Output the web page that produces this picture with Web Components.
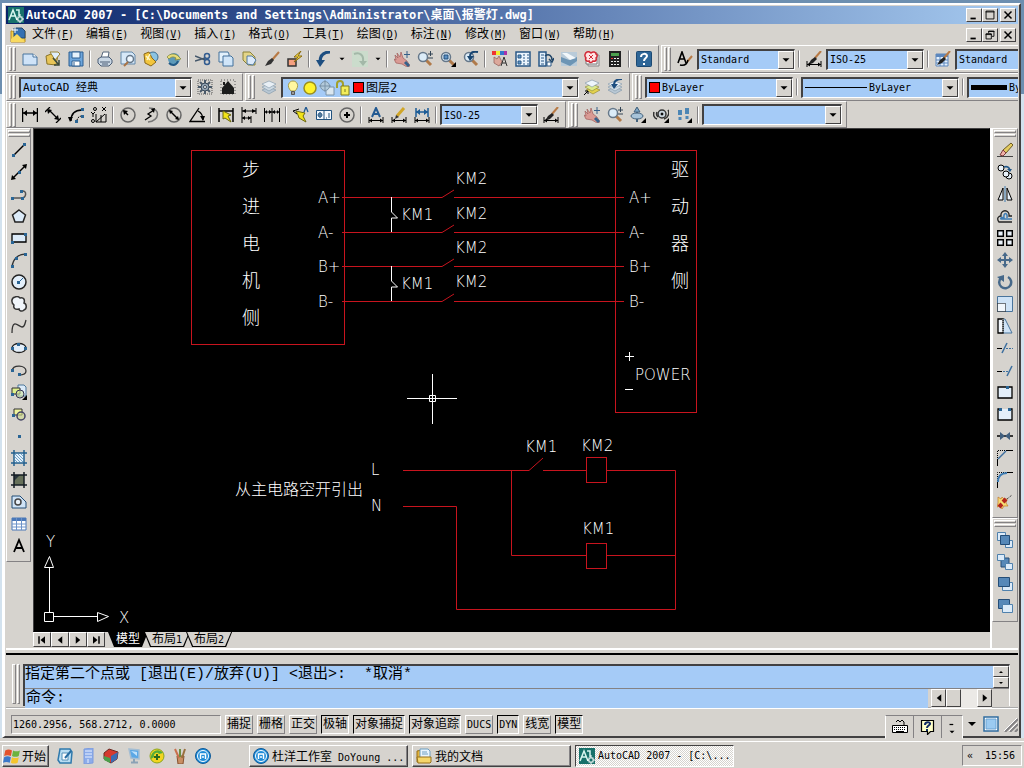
<!DOCTYPE html>
<html lang="zh-CN">
<head>
<meta charset="utf-8">
<title>AutoCAD 2007</title>
<style>
    html, body { height: 100%; }
    body {
        margin: 0;
        overflow: hidden;
        font-family: "DejaVu Sans Mono", "Noto Sans CJK SC", monospace;
        font-size: 12px;
        color: #000;
        --face: #d6d3ce;
        --light: #fff;
        --shade: #848284;
        --dark: #424142;
        --field: #a5cbf7;
    }
</style>
</head>
<body>
<cad-desktop></cad-desktop>

<script>
// ---------- icons, all on a 16 x 16 grid ----------
const dot = (x, y) => `<rect x="${x - 1}" y="${y - 1}" width="3" height="3" fill="#2a6595" stroke="none"/>`;
const corner = '<path d="M16 11v5h-5z" fill="#000" stroke="none"/>';
const magnifier = '<path d="M9 9l5 5" stroke="#b07a4a" stroke-width="3"/><circle cx="6" cy="6" r="4.5" fill="#dcecf8" stroke="#66788a" stroke-width="1.5"/>';
const hand = '<path d="M1 4l3 3-1-5 3 4 1-5 2 6 4 3 3 5-3 1-5-3-6-1-2-4 2 1z" fill="#d99a94" stroke="#a05f5c" stroke-width=".7"/><path d="M11 11l4 4" stroke="#36618a" stroke-width="3"/><path d="M13 0v7M10 3.500h6" stroke="#355f88"/>';
const layers = '<path d="M1 11l7-3 7 3-7 4z" fill="#b9c8d4" stroke="#7d93a6" stroke-width=".6"/><path d="M1 8l7-3 7 3-7 4z" fill="#cfdbe4" stroke="#7d93a6" stroke-width=".6"/><path d="M1 5l7-3 7 3-7 4z" fill="#e8eff5" stroke="#7d93a6" stroke-width=".6"/>';
const brush = '<path d="M15 0L9 7" stroke="#b87a45" stroke-width="2"/><path d="M9 6l2 2-4 4-5 2 3-5z" fill="#222" stroke="none"/>';
const sheet = '<path d="M1 3h10l4 3v8H1z" fill="#cfe3f8" stroke="#48759e"/>';
const dimLine = '<path d="M1 10v6M15 10v6M1 13.500h14"/><path d="M1 13.500l3-2v4zM15 13.500l-3-2v4z" fill="#000" stroke="none"/>';
const bolt = '<path d="M2 2l9 3-2 2 4 1-4 7 0-5-4 1 1-4z" fill="#f2e318" stroke="#6d6a10"/>';
const cadLogo = '<rect width="16" height="16" fill="#17716a" stroke="none"/><path d="M1 13L5 3l4 10M3 9h5M8 3h3v6" stroke="#d8f6ef" stroke-width="1.500"/><path d="M12 7v9M8 12h8" stroke="#fff"/><rect x="10" y="10" width="4" height="4" fill="#17716a" stroke="#fff"/>';
const maxthon = '<circle cx="8" cy="8" r="7.500" fill="#1f8cd8" stroke="#0f5a98"/><circle cx="8" cy="8" r="5.500" stroke="#fff"/><path d="M5.500 11V6h5v5M8 8v2" stroke="#fff" stroke-width="1.500"/>';

const ICONS = {
    file: '<path d="M1 4h14v11H1z" fill="#f4cf4d" stroke="#b88a1c"/><path d="M4 1h8l3 3v7H4z" fill="#3470b2" stroke="#24486d"/><path d="M1 12l6-5 8 8H1z" fill="#f8da60" stroke="none"/><path d="M5 0v6M2 3h6" stroke="#fff"/>',
    new: sheet + '<path d="M11 3v3h4" fill="#fff" stroke="#48759e"/>',
    open: '<path d="M1 5l5-2 2 2 5-1-2 10-9-1z" fill="#e8c558" stroke="#8a7428"/><path d="M5 1h8l2 2-5 6z" fill="#dfeefc" stroke="#9a8534"/><path d="M8 7l6 7M14 9v5h-5" stroke="#3b4a39" stroke-width="1.500"/>',
    save: '<path d="M1 1h14v14H1z" fill="#6ea6dc" stroke="#2d5f92"/><path d="M4 1h8v6H4z" fill="#e6f2fc" stroke="#2d5f92"/><path d="M4 10h8v5H4z" fill="#fff" stroke="#2d5f92"/><path d="M6 11v4" stroke="#2d5f92"/>',
    print: '<path d="M4 7l2-6h6l-1 6z" fill="#fff" stroke="#56667a"/><path d="M1 8l3-2h8l3 3v3l-3 3H4l-3-3z" fill="#cad7e4" stroke="#4b5d74"/><path d="M3 11h10M5 13h6" stroke="#4b5d74"/>',
    preview: '<path d="M1 1h11l3 3v9H1z" fill="#d6e8f8" stroke="#6287a8"/><circle cx="10" cy="8" r="3.500" fill="#eef7ff" stroke="#66788a" stroke-width="1.500"/><path d="M8 11l-4 4" stroke="#a97346" stroke-width="2"/>',
    publish: '<circle cx="10" cy="6" r="5" fill="#8bc3e2" stroke="#3b6d90"/><path d="M1 3l5-2 3 6 4 4-5 4-6-3z" fill="#f2c53d" stroke="#8b681a"/><path d="M3 5l4 4M7 3L4 9" stroke="#fff7c8" stroke-width="1.500"/>',
    dwf: '<circle cx="8" cy="8" r="6" fill="#5d9ab9" stroke="none"/><path d="M1 6c3-4 9-4 12 0l2 2-6 1 1-2c-3-2-5-1-7 1z" fill="#e6dc78" stroke="#7d813b" stroke-width=".7"/><path d="M12 10c-2 5-6 5-9 2" stroke="#235a86" stroke-width="2"/>',
    cut: '<path d="M0 5l10 4M0 10l10-3" stroke="#44576a" stroke-width="1.500"/><circle cx="12" cy="5" r="2.500" stroke="#325c90" stroke-width="1.500"/><circle cx="12" cy="11" r="2.500" stroke="#325c90" stroke-width="1.500"/>',
    copy: '<path d="M1 1h9l1 2v8H1z" fill="#e2f0fb" stroke="#42719b"/><path d="M5 5h8l2 2v8H5z" fill="#d0e5f8" stroke="#42719b"/>',
    paste: '<path d="M2 1h7l5 5v8H7L2 9z" fill="#e4d589" stroke="#8a8138"/><path d="M6 5h5l4 4-3 5-6-1z" fill="#dceafa" stroke="#50799f"/>',
    brush: '<path d="M15 1L8 9" stroke="#b87a45" stroke-width="2"/><path d="M8 7l2 2-3 4-6 2 3-5z" fill="#333" stroke="none"/>',
    match: '<path d="M1 8h8v7H1z" fill="#f5a080" stroke="#333" stroke-width="1.500"/><path d="M14 0L7 6l4 0-4 5 8-6h-4z" fill="#ffe94a" stroke="#8b6b10"/>',
    undo: '<path d="M14 1C7 1 4 5 4 11" stroke="#1d4e80" stroke-width="3"/><path d="M0 9h9l-5 7z" fill="#1d4e80" stroke="none"/>',
    redo: '<rect width="16" height="16" fill="#cbdccc" stroke="none"/><path d="M2 3c6-2 10 1 9 8" stroke="#a3b8a8" stroke-width="2"/><path d="M7 10h8l-4 5z" fill="#a3b8a8" stroke="none"/>',
    pan: hand,
    zoom: magnifier + '<path d="M11 3h5M13.500 0v5M11 7h5" stroke="#345"/>',
    zoomWindow: magnifier + '<path d="M4 4h4v4H4z" fill="#5c91c4" stroke="#234e7a"/>' + corner,
    zoomPrev: magnifier + '<path d="M15 1C9 0 7 2 7 6" stroke="#194671" stroke-width="2"/><path d="M4 5h7l-4 5z" fill="#194671" stroke="none"/>',
    props: '<path d="M0 0h4v4H0z" fill="#e33" stroke="none"/><path d="M4 0h4v4H4z" fill="#ee3" stroke="none"/><path d="M8 0h4v4H8z" fill="#37c" stroke="none"/><path d="M12 0h3v4h-3z" fill="#a3a" stroke="none"/><path d="M2 6l3 2 2-3 3 6-3 4-5-3z" fill="#dca89b" stroke="#8c5953" stroke-width=".7"/><path d="M9 15l3-9 3 9M10 12h4" stroke="#333"/>',
    center: '<path d="M1 1h14v14H1z" fill="#eaf4fd" stroke="#2a5886" stroke-width="1.500"/><path d="M3 4h3v3H3zM3 10h3v3H3z" fill="#6399c8" stroke="#2a5886"/><path d="M8 4h2m2 0h2M8 7h2m2 0h2M8 10h2m2 0h2M8 13h2m2 0h2" stroke="#2a5886"/>',
    palette: '<path d="M1 1h7v14H1z" fill="#e2effb" stroke="#2a5886" stroke-width="1.500"/><path d="M3 4h3M3 7h3M3 10h3M3 13h3" stroke="#2a5886"/><path d="M7 5c4-3 7 0 7 4M11 8l3 3 2-4" stroke="#1f4467" stroke-width="1.500"/><path d="M9 11h4v4H9z" fill="#fff" stroke="#2a5886"/>',
    sheets: '<path d="M0 1h16v14H0z" fill="#b9cbd9" stroke="none"/><path d="M0 6l8 3 8-3v4l-7 5-9-4z" fill="#6d95b5" stroke="none"/><path d="M1 2h5l9 5-6 2z" fill="#f2f7fa" stroke="none"/>',
    markup: '<path d="M4 4h11v11H4z" fill="#e8e8e8" stroke="#888"/><path d="M2 2h11v11H2z" fill="#fff" stroke="#777"/><path d="M3 1c2-1 3 0 4 1 2-2 5-1 5 1 2 1 1 3 0 4 1 2-1 4-3 3-1 2-4 2-4 0-3 1-4-2-3-3-2-2-1-5 1-6z" fill="#ffe3e3" stroke="#d22a36" stroke-width="1.500"/><path d="M5 4l4 4M9 4L5 8" stroke="#d22a36"/>',
    calc: '<path d="M2 0h12v16H2z" fill="#222" stroke="none"/><path d="M4 2h8v3H4z" fill="#4da04e" stroke="none"/><path d="M4 7.500h8M4 10.500h8M4 13.500h8" stroke="#eee" stroke-dasharray="2 1"/><path d="M4 7.500h2" stroke="#e33"/>',
    help: '<rect x=".5" y=".5" width="15" height="15" rx="1" fill="#2e6697" stroke="#1d4a73"/><path d="M5 6c0-4 6-4 6-1 0 2-3 2-3 5M8 12v2" stroke="#fff" stroke-width="2"/>',
    textStyle: '<path d="M1 12L5 1l4 11M2 8h6" stroke-width="1.600"/><path d="M15 5l-5 6" stroke="#b87a45" stroke-width="2"/><path d="M11 9c-1 4-4 6-8 5" stroke-width="1.500"/>',
    dimStyle: brush + dimLine,
    tableStyle: '<path d="M1 3h12v12H1z" fill="#e4f0fc" stroke="#5d87bd"/><path d="M1 3h12v3H1z" fill="#5d87bd" stroke="none"/><path d="M1 9h12M1 12h12M5 3v12M9 3v12" stroke="#5d87bd"/>' + brush,
    gear: '<path d="M1 1h14v14H1z" stroke="#555" stroke-dasharray="1 1"/><path d="M8 1v14M1 8h14M3 3l10 10M13 3L3 13" stroke="#4a5a6a" stroke-width="2"/><circle cx="8" cy="8" r="4" fill="#93a4b4" stroke="#3c4b5a"/><circle cx="8" cy="8" r="1.500" fill="#fff" stroke="#3c4b5a"/>',
    home: '<path d="M1 1h14v14H1z" stroke="#555" stroke-dasharray="1 2"/><path d="M2 9l6-7 6 7v6H2z" fill="#1c1c1c" stroke="none"/><path d="M4 3v3" stroke="#1c1c1c" stroke-width="2"/>',
    layers: layers,
    layerPrev: layers + '<path d="M15 0c-5 0-8 2-8 6" stroke="#1d4e80" stroke-width="2"/><path d="M4 5h7l-4 5z" fill="#1d4e80" stroke="none"/>',
    layerCurrent: '<path d="M2 11l7-3 7 3-7 4z" fill="#e3d24f" stroke="#8b812d" stroke-width=".6"/><path d="M1 8l7-3 7 3-7 4z" fill="#dcea8b" stroke="#8b812d" stroke-width=".6"/><path d="M1 4l7-3 7 3-7 4z" fill="#eef5fb" stroke="#7d93a6" stroke-width=".6"/><path d="M0 16l4-4M1 12h3v3" />',
    bulb: '<path d="M6 11C1 6 4 1 8 1s7 5 2 10z" fill="#fff7a0" stroke="#a79d49"/><path d="M6.500 11.500h3v3h-3z" fill="#9a9a9a" stroke="#555"/>',
    sun: '<circle cx="8" cy="8" r="6" fill="#fff32e" stroke="#9b8f1e" stroke-width="1.500"/>',
    freeze: '<path d="M7 7h8v8H7z" fill="#dbe7ef" stroke="#7a93a8"/><circle cx="6" cy="6" r="4.500" fill="#b3cadb" stroke="#7a93a8"/><path d="M6 0v12M0 6h12" stroke="#7a93a8"/>',
    lock: '<path d="M1 8V4c0-4 6-4 6 0v3" stroke="#a3a02a" stroke-width="2"/><path d="M5 6h8v9H5z" fill="#f3ee5a" stroke="#7c7b20"/><path d="M9 9v3" stroke="#7c7b20"/>',
    // dimension bar
    dLinear: '<path d="M.5 1v14M15.500 1v14M1 6h14" stroke-width="1.500"/><path d="M1 6l4-3v6zM15 6l-4-3v6z" fill="#000" stroke="none"/>',
    dAligned: '<path d="M0 5l5-5M11 16l5-5M4 3l9 9" stroke-width="1.300"/><path d="M2 2l5 1-4 4zM14 13l-5-1 4-4z" fill="#000" stroke="none"/>',
    dArc: '<path d="M3 14C3 7 7 3 14 3" stroke-width="1.500"/><path d="M9 14c0-3 2-5 5-5" stroke-dasharray="2 1"/>' + dot(14, 2) + dot(14, 9) + dot(8, 14) + '<path d="M0 10h5l-3 5z" fill="#000" stroke="none"/>',
    dOrdinate: '<path d="M5 7v8h10V7M5 15l9-8M10 8v7"/><circle cx="4" cy="2" r="1.500"/><circle cx="2" cy="14" r="1.500"/><path d="M11 0l4 4M15 0l-4 4M0 5l2 2 2-2M2 7v3"/>',
    dRadius: '<circle cx="8" cy="8" r="7" stroke="#666" stroke-width="1.500"/><path d="M8 8L4 4" stroke-width="1.500"/><path d="M3 3l5 1-4 4z" fill="#000" stroke="none"/>',
    dJogged: '<path d="M6 1c12 0 11 13-1 14" stroke="#777" stroke-width="1.500"/><path d="M2 13l6-4-3-2 6-4" stroke-width="1.300"/><path d="M12 1L8 2l3 4z" fill="#000" stroke="none"/>',
    dDiameter: '<circle cx="8" cy="8" r="7" stroke="#666" stroke-width="1.500"/><path d="M4 4l8 8" stroke-width="1.500"/><path d="M3 3l4 1-3 3zM13 13l-4-1 3-3z" fill="#000" stroke="none"/>',
    dAngular: '<path d="M16 14.500H1L10 1M9 4c4 2 5 5 5 9" stroke-width="1.300"/><path d="M11 9h5l-2 5z" fill="#000" stroke="none"/>',
    dQuick: '<path d="M1 1v14M15 1v14M1 4h14" stroke-width="1.500"/><path d="M5 4l8 4-3 1 3 6-6-4-2 1z" fill="#f2e318" stroke="#6d6a10"/>',
    dBaseline: '<path d="M1 0v16M15 1v6M10 9v7M1 4h14M1 11h9"/><path d="M1 4l4-2v4zM15 4l-4-2v4zM1 11l3-2v4zM10 11l-3-2v4z" fill="#000" stroke="none"/>',
    dContinue: '<path d="M.5 1v14M8 1v14M15.500 1v14M1 5h14"/><path d="M8 5L5 3v4zM8 5l3-2v4zM1 5l2-2v4zM15 5l-2-2v4z" fill="#000" stroke="none"/>',
    leader: '<path d="M3 4l9 2-2 3 3 6-7-4-1-3z" fill="#f2e318" stroke="#6d6a10"/><path d="M0 4l6-2M0 4l4 3"/><path d="M11 5l2-5 2 5" stroke="#235a92" stroke-width="1.300"/>',
    tolerance: '<path d="M.5 3.500h15v9H.5zM8 4v8" fill="#f4f9fe" stroke="#21527e"/><circle cx="4" cy="8" r="2" stroke="#21527e"/><path d="M4 5v6M2 8h4M10 11h1M13 6v5" stroke="#21527e"/>',
    centerMark: '<circle cx="8" cy="8" r="7" stroke="#666" stroke-width="1.500"/><path d="M8 5v6M5 8h6" stroke-width="2"/>',
    dEdit: dimLine + '<path d="M4 10l4-9 4 9M5 7h6" stroke="#235a92" stroke-width="2"/>',
    dTextEdit: dimLine + '<path d="M13 1L6 9" stroke="#d1a628" stroke-width="3"/><path d="M4 12l1-4 3 2z" fill="#333" stroke="none"/>',
    dUpdate: dimLine + '<path d="M2 1v9M14 1v9M2 5h12" stroke="#1d5c96" stroke-width="1.500"/><path d="M2 5l4-3v6zM14 5l-4-3v6z" fill="#1d5c96" stroke="none"/>',
    orbit: '<path d="M7 1v14" stroke="#44637e" stroke-width="2"/><path d="M4 5l3-5 3 5z" fill="#7ea5c4" stroke="#44637e"/><ellipse cx="7" cy="9" rx="6" ry="3" fill="#a7c3d9" stroke="#44637e"/>' + corner,
    walk: '<path d="M1 5c-1 3 0 6 3 7M4 5c-1 2 0 4 1 5M15 3c2 3 0 8-4 9" stroke="#333" stroke-width="1.500"/><circle cx="9" cy="7" r="4" fill="#c9d3dc" stroke="#333" stroke-width="1.500"/><circle cx="9" cy="7" r="1" fill="#000"/>' + corner,
    feet: '<path d="M4 3v5M11 1v6" stroke="#4c86b5" stroke-width="4"/><path d="M4 10v3M11 9v3" stroke="#4c86b5" stroke-width="3"/>' + corner,
    // draw bar
    line: '<path d="M2 14L14 2" stroke-width="1.500"/>' + dot(2, 13) + dot(13, 2),
    xline: '<path d="M2 14L14 2" stroke-width="1.500"/><path d="M0 16l1-5 4 4zM16 0l-1 5-4-4z" fill="#000" stroke="none"/>' + dot(8, 8),
    pline: '<path d="M1 12h9c6 0 6-8 1-7" stroke="#555" stroke-width="1.500"/>' + dot(1, 12) + dot(11, 12) + dot(10, 5),
    polygon: '<path d="M8 2l6.500 5L12 14H4L1.500 7z" fill="#dcebf9" stroke="#222" stroke-width="1.500"/>',
    rect: '<path d="M1 4h14v8H1z" fill="#dcebf9" stroke-width="1.300"/>' + dot(1, 12) + dot(14, 4),
    arc: '<path d="M1 15C2 7 7 2 15 2" stroke="#333" stroke-width="1.500"/>' + dot(1, 14) + dot(5, 6) + dot(14, 2),
    circle: '<circle cx="8" cy="8" r="7" fill="#e3effa" stroke="#222" stroke-width="1.500"/><path d="M8 8l4-4" stroke="#2a6595"/>' + dot(7, 8),
    cloud: '<path d="M4 1c2-1 4 0 5 1 4-1 5 2 4 5 3 1 3 6 0 7-2 2-5 1-5-1-4 1-6-1-5-4-3-2-3-7 1-8z" fill="#f1f6fb" stroke="#333" stroke-width="1.500"/>',
    spline: '<path d="M1 15c0-16 7-6 10-6 3 0 3-4 4-7" stroke="#333" stroke-width="1.300"/>',
    ellipse: '<ellipse cx="8" cy="8" rx="7" ry="4.500" fill="#e3effa" stroke="#222" stroke-width="1.300"/>' + dot(7, 4) + dot(1, 8) + dot(14, 8),
    ellipseArc: '<path d="M1 9C2 2 15 3 15 9c0 3-4 4-7 4" stroke="#333" stroke-width="1.300"/>' + dot(1, 8) + dot(8, 12),
    insert: '<path d="M7 1h6l2 2v9H7z" fill="#dcebf9" stroke="#4c7799"/><path d="M1 4h8v6H1z" fill="#dff08c" stroke="#333"/><circle cx="9" cy="10" r="4" fill="#cfe2a0" fill-opacity=".6" stroke="#335"/>' + dot(1, 10) + corner,
    block: '<path d="M3 3h8v6H3z" fill="#eff59d" stroke="#333"/><circle cx="10" cy="10" r="4" fill="#cfdc90" fill-opacity=".6" stroke="#446" stroke-width="1.500"/>' + dot(2, 9),
    point: dot(8, 8),
    hatch: '<path d="M3 3h10v10H3z" fill="#e4f1fb" stroke="none"/><path d="M3 0v16M13 0v16M0 3h16M0 13h16" stroke="#23608f" stroke-width="1.500"/><path d="M4 4l8 8M7 4l5 5M4 7l5 5M10 4l2 2M4 10l2 2" stroke="#3c7fb1" stroke-width=".7"/>',
    gradient: '<path d="M3 3h10v10H3z" fill="#66705a" stroke="none"/><path d="M3 9l6-6H3z" fill="#28343c" stroke="none"/><path d="M3 0v16M13 0v16M0 3h16M0 13h16" stroke="#141c24" stroke-width="1.500"/>',
    region: '<path d="M1 2h8l6 6v6H1z" fill="#cfe3f6" stroke="#234c75"/><circle cx="7" cy="8" r="3" fill="#e8f1fa" stroke="#444" stroke-width="1.500"/>',
    table: '<path d="M1 2h14v12H1z" fill="#fff" stroke="#4a78b8"/><path d="M1 2h14v3H1z" fill="#4a78b8" stroke="none"/><path d="M1 8h14M1 11h14M5.500 2v12M10.500 2v12" stroke="#6c93c9"/>',
    mtext: '<path d="M3 14L8 2l5 12M5 10h6" stroke-width="1.800"/>',
    // modify bar
    erase: '<path d="M0 14.500h16" stroke="#444"/><path d="M14 1l2 2-7 8-3-3z" fill="#e3cb60" stroke="#6b5a22"/><path d="M6 8l3 3-3 3-3-1z" fill="#f0b0a8" stroke="#7c3c3c"/>',
    copyObj: '<circle cx="4" cy="4" r="3" fill="#e9f2fa"/><circle cx="12" cy="12" r="3" fill="#e9f2fa"/><circle cx="9" cy="10" r="3" fill="#e9f2fa"/><path d="M7 3c3-1 5 0 6 3" stroke="#1e5587" stroke-width="1.500"/><path d="M10 5h5l-2 3z" fill="#1e5587" stroke="none"/>',
    mirror: '<path d="M6 2v12H1zM10 2v12h5z" fill="#eaf2fa"/><path d="M8 0v16" stroke="#3d7cb4"/>',
    offset: '<path d="M15 14H2c-3-4 0-6 2-6C3 1 13 1 12 8h3" stroke="#222" stroke-width="1.300"/><path d="M15 11H4c-1-1 1-2 3-1-1-6 4-6 3 0" stroke="#3d7cb4" stroke-width="1.500"/>',
    array: '<path d="M.7.700h5.600v5.600H.7zM9.700.700h5.600v5.600H9.700zM.7 9.700h5.600v5.600H.7zM9.700 9.700h5.600v5.600H9.700z" fill="#eaf2fa" stroke-width="1.400"/>',
    move: '<path d="M8 2v12M2 8h12" stroke="#47698a" stroke-width="2"/><path d="M8 0l3 4H5zM8 16l3-4H5zM0 8l4-3v6zM16 8l-4-3v6z" fill="#47698a" stroke="none"/>',
    rotate: '<path d="M4 4a6 6 0 1 0 7-1" stroke="#47698a" stroke-width="2.500"/><path d="M0 3l7-2v7z" fill="#47698a" stroke="none"/>',
    scale: '<path d="M.5.500h15v15H.5z" fill="#cfe3f6" stroke="#49749c"/><path d="M.5 7.500h8v8h-8z" fill="#f2f7fc" stroke-dasharray="1 1"/>',
    stretch: '<path d="M6 1h2l7 14H6z" fill="#cfe3f6" stroke="#49749c"/><path d="M1 1h5v14H1z" fill="#f2f7fc" stroke-width="1.300"/><path d="M6 1v14" stroke="#d6d3ce" stroke-dasharray="1 1"/>',
    trim: '<path d="M0 8.500h5"/><path d="M5 13l5-10" stroke="#3d6f9e" stroke-width="1.500"/><path d="M9 8.500h7" stroke="#3d6f9e" stroke-dasharray="2 1"/>',
    extend: '<path d="M0 9.500h5"/><path d="M10 14l5-10" stroke="#3d6f9e" stroke-width="1.500"/><path d="M6 9.500h6" stroke="#3d6f9e" stroke-dasharray="2 1"/>',
    breakAt: '<path d="M1 3h14v11H1z" fill="#e4effa" stroke-width="1.300"/>' + dot(10, 3),
    breakObj: '<path d="M4 3H1v11h14V3h-3" fill="#e4effa" stroke-width="1.300"/>' + dot(3, 3) + dot(12, 3),
    join: '<path d="M0 8h16" stroke-width="1.500"/><path d="M3 4l5 4-5 4zM13 4L8 8l5 4z" fill="#405f7e" stroke="none"/>',
    chamfer: '<path d="M.5 16V9M9 .500h7"/><path d="M.5 8V.500H9" stroke-dasharray="1 1"/><path d="M1 9l8-8" stroke="#3d6f9e" stroke-width="1.500"/>',
    fillet: '<path d="M.5 16v-6M10 .500h6"/><path d="M.5 9V.500H9" stroke-dasharray="1 1"/><path d="M1 10c0-6 3-9 9-9" stroke="#3d7cb4" stroke-width="2"/>',
    explode: '<path d="M1 3l3 2 1-2 2 2 3 0-1 4 2 3-4 0-2 3-2-3-3 1 1-4z" fill="#f6dc72" stroke="#c3762a" stroke-width=".7"/><path d="M2 13l3-3M6 8l3-3" stroke="#b3261e" stroke-width="4"/><path d="M10 5l5-4" stroke="#222" stroke-dasharray="1 1"/>',
    front: '<path d="M.5.500h8v8h-8zM8.500 8.500h7v7h-7z" fill="#dcebf9" stroke="#4f81ad"/><path d="M3.500 3.500h9v9h-9z" fill="#5688b8" stroke="#244d77"/>',
    back: '<path d="M4 4h8v9H4z" fill="#5688b8" stroke="#244d77"/><path d="M.5.500h7v6h-7zM8.500 9.500h7v6h-7z" fill="#dcebf9" stroke="#4f81ad"/>',
    above: '<path d="M5.500 6.500h10v8h-10z" fill="#dcebf9" stroke="#4f81ad"/><path d="M1.500 1.500h11v9h-11z" fill="#5688b8" stroke="#244d77"/>',
    under: '<path d="M1.500 1.500h11v9h-11z" fill="#5688b8" stroke="#244d77"/><path d="M5.500 6.500h10v8h-10z" fill="#dcebf9" stroke="#4f81ad"/>',
    // window, task bar
    logo: cadLogo,
    windows: '<path d="M2 3c2-1 4-1 6 0L7 8C5 7 3 7 1 8z" fill="#e3522b" stroke="none"/><path d="M9 3c2 1 4 1 6 0l-1 5c-2 1-4 1-6 0z" fill="#6cb33f" stroke="none"/><path d="M1 9c2-1 4-1 6 0l-1 5c-2-1-4-1-6 0z" fill="#3b78c9" stroke="none"/><path d="M8 9c2 1 4 1 6 0l-1 5c-2 1-4 1-6 0z" fill="#f5c52c" stroke="none"/>',
    show: '<path d="M3 1h10l2 3-1 11H3L1 12z" fill="#b9ddf2" stroke="#2f79ac" stroke-width="1.500"/><path d="M5 5h6v7H5z" fill="#fff" stroke="#5590b8"/><path d="M14 3L8 10" stroke="#286da2" stroke-width="2"/>',
    server: '<path d="M4 1l9-1v15l-9 1z" fill="#8cacea" stroke="#7d9cdf"/><path d="M5 3h7M5 6h7M5 9h7M8 11v4" stroke="#eaf1ff"/>',
    cubes: '<path d="M1 5l5-4 9 3-1 7-6 4-7-4z" fill="#d63a2f" stroke="#6b2a22"/><path d="M8 8l7-4-1 7-6 4z" fill="#3a6cb4" stroke="none"/><path d="M1 8l6 2v5l-6-3z" fill="#4b9e4a" stroke="none"/>',
    monitor: '<path d="M3 1l10 1v9l-8-1z" fill="#5ba8e6" stroke="#a3bdd3" stroke-width="1.500"/><path d="M5 3l6 1v4z" fill="#bfe1fb" stroke="none"/><path d="M8 11v3M5 14.500h7" stroke="#8ba2b5" stroke-width="2"/>',
    shield: '<circle cx="8" cy="8" r="7" fill="#f3d51f" stroke="#8aa51e"/><path d="M2 11C1 4 9-1 14 5l-4 1c-2-3-6 0-5 3z" fill="#56ad38" stroke="none"/><path d="M8 6v6M5 9h6" stroke="#2d6b1d" stroke-width="2"/>',
    pencils: '<path d="M5 8l1 8h5l1-8z" fill="#c98f64" stroke="#85512f"/><path d="M3 1l4 9" stroke="#c86f4d" stroke-width="2"/><path d="M8 1v8" stroke="#6c8f42" stroke-width="2"/><path d="M13 1l-3 9" stroke="#99703e" stroke-width="2"/>',
    maxthon: maxthon,
    folder: '<path d="M1 3l5-1 2 2h5v10H1z" fill="#e3b23a" stroke="#987118"/><path d="M4 1h8l2 2v8H4z" fill="#e9f4fd" stroke="#6f9fc2"/><path d="M6 4h5M6 6h6" stroke="#6f9fc2"/><path d="M1 9h14v5l-1 1H2z" fill="#f5d66a" stroke="#987118"/>',
    keyboard: '<path d="M4 3l2-2 2 2 2-2 2 2v3"/><path d="M.5 6.500h15v7H.500z" fill="#fff"/><path d="M2 8.500h12M2 10.500h12" stroke-dasharray="1 1"/><path d="M4 12.500h8"/>',
    hint: '<path d="M1.500 1.500h12v11h-3l-3 3v-3h-6z" fill="#ffffc8" stroke-width="1.200"/><path d="M5 6c0-4 6-3 5-1 0 1-3 2-3 4M7 10v2" stroke="#112a66" stroke-width="2"/>',
    clean: '<path d="M1 1h14v14H1z" fill="#fff" stroke="#2f6ca0" stroke-width="1.500"/><path d="M3 3h10v10H3z" fill="#9bcaf1" stroke="#6aa2d2"/>',
    resize: '<path d="M3 16L16 3M8 16l8-8M13 16l3-3" stroke="#848284" stroke-width="2"/><path d="M2 15L15 2M7 15l8-8" stroke="#fff"/>',
    down: '<path d="M4 6h8l-4 4z" fill="#000" stroke="none"/>',
    up: '<path d="M4 10h8L8 6z" fill="#000" stroke="none"/>',
    left: '<path d="M11 3v10L5 8z" fill="#000" stroke="none"/>',
    right: '<path d="M5 3v10l6-5z" fill="#000" stroke="none"/>',
    first: '<path d="M12 3v10L6 8z" fill="#000" stroke="none"/><path d="M4 3v10" stroke-width="2"/>',
    last: '<path d="M4 3v10l6-5z" fill="#000" stroke="none"/><path d="M12 3v10" stroke-width="2"/>',
    min: '<path d="M4 12h6" stroke-width="2"/>',
    max: '<path d="M3.500 3.500h9v9h-9zM3 4.500h10"/>',
    restore: '<path d="M6.500 6V3.500h6v6H10M6 4h7M3.500 6.500h6v6h-6zM3 7.500h7"/>',
    close: '<path d="M4 4l8 8M12 4l-8 8" stroke-width="1.700"/>'
};

const svg = (name, size = 16) =>
    `<svg width="${size}" height="${size}" viewBox="0 0 16 16" fill="none" stroke="#000" aria-hidden="true">${ICONS[name] || ''}</svg>`;

const RESET = `
    *, *::before { box-sizing: border-box; }
    button { font: inherit; color: inherit; margin: 0; padding: 0; border: 0; background: none; white-space: nowrap; }
    svg { display: block; flex: none; }
    .latin { font-size: 10px; }
`;

class CadElement extends HTMLElement {
    constructor() {
        super();
        this.attachShadow({ mode: 'open' });
    }
    connectedCallback() {
        this.shadowRoot.innerHTML = `<style>${RESET}</style>` + this.render();
    }
}

// flat tool button
class CadTool extends CadElement {
    render() {
        const name = this.getAttribute('icon');
        return `
            <style>
                :host { display: block; flex: none; width: 23px; height: 22px; }
                :host([narrow]) { width: 13px; }
                button { display: flex; width: 100%; height: 100%; align-items: center; justify-content: center; }
            </style>
            <button aria-label="${name}">${svg(name, this.hasAttribute('narrow') ? 10 : 16)}</button>`;
    }
}
customElements.define('cad-tool', CadTool);

// small raised button: window controls, scroll arrows, tab arrows
class CadPush extends CadElement {
    render() {
        const name = this.getAttribute('icon');
        return `
            <style>
                :host { display: block; flex: none; width: 16px; height: 14px; }
                button {
                    display: flex; width: 100%; height: 100%; align-items: center; justify-content: center;
                    background: var(--face);
                    border: 1px solid; border-color: var(--light) var(--dark) var(--dark) var(--light);
                    overflow: hidden;
                }
            </style>
            <button aria-label="${name}">${svg(name, Number(this.getAttribute('size')) || 14)}</button>`;
    }
}
customElements.define('cad-push', CadPush);

class CadSelect extends CadElement {
    render() {
        return `
            <style>
                :host {
                    display: flex; flex: none; align-items: center; width: 98px; height: 21px; margin: 0 1px;
                    background: var(--field);
                    border: 1px solid; border-width: 2px 1px 1px 2px;
                    border-color: var(--dark) var(--light) var(--light) var(--dark);
                    overflow: hidden;
                    box-sizing: border-box;
                }
                select {
                    appearance: none; flex: 1; min-width: 0; height: 18px; margin: 0; padding: 0 2px;
                    border: 0; border-radius: 0; background: none; color: #000;
                    font-family: inherit; font-size: var(--text, 10px);
                }
                .arrow {
                    flex: none; display: flex; width: 16px; height: 18px; align-items: center; justify-content: center;
                    background: var(--face); pointer-events: none;
                    border: 1px solid; border-color: var(--light) var(--dark) var(--dark) var(--light);
                }
            </style>
            <slot></slot>
            <select aria-label="${this.getAttribute('label')}"><option>${this.getAttribute('value') || ''}</option></select>
            <span class="arrow">${svg('down', 14)}</span>`;
    }
}
customElements.define('cad-select', CadSelect);

class CadSeparator extends CadElement {
    render() {
        return `
            <style>
                :host { display: block; flex: none; width: 2px; height: 18px; margin: 0 2px; border: 1px solid; border-color: transparent var(--light) transparent var(--shade); box-sizing: border-box; }
            </style>`;
    }
}
customElements.define('cad-separator', CadSeparator);

class CadToolbar extends CadElement {
    render() {
        return `
            <style>
                :host {
                    display: flex; flex: none; align-items: center; padding-right: 3px;
                    border: 1px solid; border-color: var(--light) var(--shade) var(--shade) var(--light);
                    box-sizing: border-box;
                }
                :host([vertical]) { flex-direction: column; padding: 0 0 4px; }
                .grip { flex: none; display: flex; gap: 1px; width: 11px; height: 24px; padding: 0 2px; }
                .grip i { flex: 1; border: 1px solid; border-color: var(--light) var(--shade) var(--shade) var(--light); }
                :host([vertical]) .grip { flex-direction: column; width: 22px; height: 10px; padding: 1px 0 2px; }
            </style>
            <span class="grip"><i></i><i></i></span><slot></slot>`;
    }
}
customElements.define('cad-toolbar', CadToolbar);

class CadTitlebar extends CadElement {
    render() {
        return `
            <style>
                :host {
                    display: flex; height: 18px; align-items: center; padding: 0 2px;
                    background: linear-gradient(90deg, #0a246a, #a6caf0);
                    color: #fff; font-weight: bold;
                }
                h1 { flex: 1; margin: 0 0 0 2px; font-size: 12px; line-height: 18px; white-space: nowrap; overflow: hidden; }
                cad-push:last-of-type { margin-left: 2px; }
            </style>
            ${svg('logo')}
            <h1>AutoCAD 2007 - [C:\\Documents and Settings\\Administrator\\桌面\\报警灯.dwg]</h1>
            <cad-push icon="min"></cad-push><cad-push icon="max"></cad-push><cad-push icon="close"></cad-push>`;
    }
}
customElements.define('cad-titlebar', CadTitlebar);

class CadMenubar extends CadElement {
    render() {
        const menus = [['文件', 'F'], ['编辑', 'E'], ['视图', 'V'], ['插入', 'I'], ['格式', 'O'], ['工具', 'T'],
            ['绘图', 'D'], ['标注', 'N'], ['修改', 'M'], ['窗口', 'W'], ['帮助', 'H']];
        return `
            <style>
                :host { display: flex; height: 21px; align-items: center; padding: 0 2px 0 4px; }
                nav { flex: 1; display: flex; }
                nav button { padding: 0 6px; line-height: 18px; }
                cad-push:last-of-type { margin-left: 2px; }
            </style>
            ${svg('file')}
            <nav>${menus.map(([t, k]) => `<button>${t}<span class="latin">(<u>${k}</u>)</span></button>`).join('')}</nav>
            <cad-push icon="min"></cad-push><cad-push icon="restore"></cad-push><cad-push icon="close"></cad-push>`;
    }
}
customElements.define('cad-menubar', CadMenubar);

// "new open | print" -> tools, "|" is a separator, "v" a small arrow
const tools = list => list.split(' ').map(n =>
    n === '|' ? '<cad-separator></cad-separator>'
        : n === 'v' ? '<cad-tool narrow icon="down"></cad-tool>'
            : `<cad-tool icon="${n}"></cad-tool>`).join('');

class CadToolRows extends CadElement {
    render() {
        return `
            <style>
                :host { display: block; }
                .row { display: flex; height: 28px; gap: 2px; overflow: hidden; }
                .row:last-child { height: 27px; }
                .workspace { width: 173px; --text: 11px; }
                .layer { width: 298px; --text: 12px; }
                .color { width: 148px; }
                .linetype { width: 158px; }
                .view { width: 140px; }
                .lead { display: flex; flex: none; align-items: center; gap: 1px; margin-left: 2px; }
                .red { width: 11px; height: 11px; background: #f00; border: 1px solid #000; }
                .thin { width: 62px; height: 1px; background: #000; }
                .thick { width: 36px; height: 5px; background: #000; }
            </style>
            <div class="row">
                <cad-toolbar>${tools('new open save | print preview publish dwf | cut copy paste brush match | undo v redo v | pan zoom zoomWindow zoomPrev | props center palette sheets markup calc | help')}</cad-toolbar>
                <cad-toolbar>
                    ${tools('textStyle')}<cad-select label="文字样式" value="Standard"></cad-select>
                    ${tools('| dimStyle')}<cad-select label="标注样式" value="ISO-25"></cad-select>
                    ${tools('| tableStyle')}<cad-select label="表格样式" value="Standard"></cad-select>
                </cad-toolbar>
            </div>
            <div class="row">
                <cad-toolbar><cad-select class="workspace" label="工作空间" value="AutoCAD 经典"></cad-select>${tools('gear home')}</cad-toolbar>
                <cad-toolbar>
                    ${tools('layers')}
                    <cad-select class="layer" label="图层" value="图层2">
                        <span class="lead">${['bulb', 'sun', 'freeze', 'lock'].map(n => svg(n)).join('')}<span class="red"></span></span>
                    </cad-select>
                    ${tools('layerCurrent layerPrev')}
                </cad-toolbar>
                <cad-toolbar>
                    <cad-select class="color" label="颜色" value="ByLayer"><span class="lead"><span class="red"></span></span></cad-select>
                    <cad-separator></cad-separator>
                    <cad-select class="linetype" label="线型" value="ByLayer"><span class="lead"><span class="thin"></span></span></cad-select>
                    <cad-separator></cad-separator>
                    <cad-select class="linetype" label="线宽" value="ByLayer"><span class="lead"><span class="thick"></span></span></cad-select>
                </cad-toolbar>
            </div>
            <div class="row">
                <cad-toolbar>
                    ${tools('dLinear dAligned dArc dOrdinate | dRadius dJogged dDiameter dAngular | dQuick dBaseline dContinue | leader tolerance centerMark | dEdit dTextEdit dUpdate |')}
                    <cad-select label="标注样式" value="ISO-25"></cad-select>${tools('dimStyle')}
                </cad-toolbar>
                <cad-toolbar>
                    ${tools('pan zoom orbit walk feet |')}<cad-select class="view" label="视图"></cad-select>
                </cad-toolbar>
            </div>`;
    }
}
customElements.define('cad-tool-rows', CadToolRows);

// model space: the wiring diagram
class CadDrawing extends CadElement {
    label(x, y, text, cls = '') {
        return `<text class="${cls}" x="${x}" y="${y}">${text}</text>`;
    }
    column(x, y, chars) {
        return [...chars].map((c, i) => this.label(x, y + i * 37, c, 'tall')).join('');
    }
    render() {
        const lines = [[68, 'A+'], [103, 'A-'], [137, 'B+'], [172, 'B-']];
        const wires = lines.map(([y]) => `<path d="M308 ${y + .5}H408L420 ${y - 7}M420 ${y + .5}H590"/>`).join('');
        const pins = lines.map(([y, t]) => this.label(284, y + 6, t) + this.label(595, y + 6, t)).join('');
        const km2 = [54, 89, 123, 157].map(y => this.label(421, y + 1, 'KM2')).join('');
        const km1 = [68, 137].map(y =>
            `<path class="white" d="M357.500 ${y}v15l6 6h-6v14"/>` + this.label(367, y + 23, 'KM1')).join('');
        return `
            <style>
                :host { display: block; flex: 1; min-height: 0; background: #000; border: 1px solid; border-color: var(--dark) #000 #000 var(--dark); }
                svg { width: 100%; height: 100%; }
                path, rect { fill: none; stroke: #c8141e; stroke-width: 1; }
                .white { stroke: #fff; }
                text { fill: #fff; stroke: none; font-family: "DejaVu Sans Light", "DejaVu Sans", sans-serif; font-weight: 200; font-size: 15px; }
                .tall { font-family: "Noto Sans CJK SC", sans-serif; font-weight: 300; font-size: 18px; }
                .note { font-family: "Noto Sans CJK SC", sans-serif; font-weight: 300; font-size: 16px; }
            </style>
            <svg>
                <rect x="157.500" y="21.500" width="153" height="194"/>
                <rect x="581.500" y="21.500" width="81" height="262"/>
                ${wires}${km1}${pins}${km2}
                ${this.column(208, 47, '步进电机侧')}
                ${this.column(637, 47, '驱动器侧')}
                <path class="white" d="M591 227.500h9M595.500 223v9M591 260.500h8"/>
                ${this.label(601, 251, 'POWER')}

                <path d="M369 341.500H495L509 329M509 341.500H552M572 341.500H641.500V480.500H422.500V377.500H369"/>
                <path d="M477.500 341V426.500H552M572 426.500H641"/>
                <rect x="552.500" y="328.500" width="20" height="25"/>
                <rect x="552.500" y="414.500" width="20" height="25"/>
                ${this.label(491, 323, 'KM1')}${this.label(547, 322, 'KM2')}${this.label(548, 405, 'KM1')}
                ${this.label(201, 366, '从主电路空开引出', 'note')}
                ${this.label(337, 346, 'L')}${this.label(337, 382, 'N')}

                <path class="white" d="M398.500 245v50M373 269.500h50M395.500 266.500h6v6h-6z"/>
                <path class="white" d="M10.500 483.500h9v9h-9zM15.500 483V439M20 487.500H63M10.500 438.500l5-11 4 11zM63.500 483.500v9l11-5z"/>
                ${this.label(12, 418, 'Y')}${this.label(85, 494, 'X')}
            </svg>`;
    }
}
customElements.define('cad-drawing', CadDrawing);

class CadTabs extends CadElement {
    render() {
        return `
            <style>
                :host { display: flex; height: 16px; flex: none; }
                cad-push { width: 18px; height: 15px; }
                [role=tablist] { display: flex; margin-left: 3px; }
                [role=tab] {
                    position: relative; height: 15px; padding: 0 8px; line-height: 13px; background: #000;
                    clip-path: polygon(0 0, 100% 0, calc(100% - 6px) 100%, 6px 100%);
                }
                [role=tab] + [role=tab] { margin-left: -4px; }
                [role=tab]::before {
                    content: ""; position: absolute; inset: 0 1px 1px; background: var(--face);
                    clip-path: polygon(0 0, 100% 0, calc(100% - 6px) 100%, 6px 100%);
                }
                [role=tab] span { position: relative; }
                [aria-selected=true] { color: #fff; }
                [aria-selected=true]::before { background: #000; }
            </style>
            <cad-push icon="first" size="12"></cad-push><cad-push icon="left" size="12"></cad-push>
            <cad-push icon="right" size="12"></cad-push><cad-push icon="last" size="12"></cad-push>
            <div role="tablist">
                <button role="tab" aria-selected="true"><span>模型</span></button>
                <button role="tab"><span>布局<span class="latin">1</span></span></button>
                <button role="tab"><span>布局<span class="latin">2</span></span></button>
            </div>`;
    }
}
customElements.define('cad-tabs', CadTabs);

class CadWorkspace extends CadElement {
    render() {
        return `
            <style>
                :host { display: grid; grid-template-columns: 27px minmax(0, 1fr) 28px; flex: 1; min-height: 0; border-bottom: 2px solid var(--light); }
                aside:first-of-type { padding-right: 2px; }
                .right { border-left: 2px solid var(--light); }
                main { display: flex; flex-direction: column; min-height: 0; }
            </style>
            <aside><cad-toolbar vertical>${tools('line xline pline polygon rect arc circle cloud spline ellipse ellipseArc insert block point hatch gradient region table mtext')}</cad-toolbar></aside>
            <main><cad-drawing></cad-drawing><cad-tabs></cad-tabs></main>
            <aside class="right">
                <cad-toolbar vertical>${tools('erase copyObj mirror offset array move rotate scale stretch trim extend breakAt breakObj join chamfer fillet explode')}</cad-toolbar>
                <cad-toolbar vertical>${tools('front back above under')}</cad-toolbar>
            </aside>`;
    }
}
customElements.define('cad-workspace', CadWorkspace);

class CadCommand extends CadElement {
    render() {
        return `
            <style>
                :host {
                    display: flex; flex: none; height: 56px; margin-top: 3px; padding: 9px 8px 1px 6px; gap: 3px;
                    border-top: 2px solid #000; border-bottom: 2px groove var(--light);
                    font-family: "Liberation Mono", "Noto Sans CJK SC", monospace; font-size: 15px;
                    box-sizing: border-box;
                }
                .grip { display: flex; gap: 1px; width: 8px; height: 40px; }
                .grip i { flex: 1; border: 1px solid; border-color: var(--light) var(--shade) var(--shade) var(--light); }
                .box { flex: 1; min-width: 0; border: 1px solid; border-width: 2px 1px 0 2px; border-color: var(--dark) var(--light) var(--light) var(--dark); }
                .history { display: flex; height: 23px; background: var(--field); border-bottom: 1px solid var(--shade); }
                .history p { flex: 1; margin: 0; line-height: 18px; white-space: pre; overflow: hidden; }
                .history cad-push { width: 16px; height: 11px; }
                .prompt { display: flex; height: 19px; }
                label { padding-left: 1px; line-height: 19px; background: var(--field); }
                input { flex: 1; min-width: 0; border: 0; padding: 0; background: var(--field); font: inherit; }
                .scroll { display: flex; width: 61px; margin: 0 17px 0 3px; background: #ebe9e6; justify-content: space-between; }
                .scroll cad-push { width: 15px; height: 18px; }
                .scroll cad-push:nth-child(2) { margin-right: auto; }
            </style>
            <span class="grip"><i></i><i></i></span>
            <div class="box">
                <div class="history"><p>指定第二个点或 [退出(E)/放弃(U)] &lt;退出&gt;:  *取消*</p><div><cad-push icon="up" size="8"></cad-push><cad-push icon="down" size="8"></cad-push></div></div>
                <div class="prompt">
                    <label for="cmd">命令:</label><input id="cmd">
                    <div class="scroll"><cad-push icon="left" size="12"></cad-push><cad-push icon="thumb"></cad-push><cad-push icon="right" size="12"></cad-push></div>
                </div>
            </div>`;
    }
}
customElements.define('cad-command', CadCommand);

class CadStatus extends CadElement {
    render() {
        const modes = [['捕捉', 0], ['栅格', 0], ['正交', 0], ['极轴', 1], ['对象捕捉', 1], ['对象追踪', 1],
            ['DUCS', 0], ['DYN', 1], ['线宽', 0], ['模型', 1]];
        return `
            <style>
                :host { display: flex; flex: none; position: relative; height: 26px; align-items: center; padding: 4px 0 0 5px; gap: 4px; box-sizing: border-box; }
                .coords {
                    width: 210px; height: 19px; padding-left: 1px; font-size: 10px; line-height: 18px;
                    border: 1px solid; border-color: var(--shade) var(--light) var(--light) var(--shade);
                }
                button {
                    height: 19px; padding: 0 1px; line-height: 17px;
                    border: 1px solid; border-color: var(--light) var(--shade) var(--shade) var(--light);
                }
                [aria-pressed=true] { border-color: #000 var(--light) var(--light) #000; }
                .end { display: flex; align-items: center; margin-left: auto; gap: 3px; }
                /* input method bar, floats over the window edge */
                .ime {
                    position: absolute; right: 55px; top: 6px; display: flex; height: 24px; z-index: 1;
                    background: var(--face); border: 1px solid; border-color: var(--shade) var(--light) var(--face) var(--light);
                }
                .ime button { height: 22px; width: 28px; border: 0; border-right: 1px solid var(--shade); display: flex; align-items: center; justify-content: center; }
                .ime button:last-child { width: 20px; border: 0; flex-direction: column; }
            </style>
            <div class="coords">1260.2956, 568.2712, 0.0000</div>
            ${modes.map(([t, on]) => `<button class="${/[A-Z]/.test(t) ? 'latin' : ''}" aria-pressed="${!!on}">${t}</button>`).join('')}
            <div class="ime">
                <button aria-label="keyboard">${svg('keyboard')}</button>
                <button aria-label="help">${svg('hint')}</button>
                <button aria-label="options">${svg('min', 10)}${svg('down', 10)}</button>
            </div>
            <div class="end">${svg('down')}${svg('clean')}${svg('resize')}</div>`;
    }
}
customElements.define('cad-status', CadStatus);

class CadTaskbar extends CadElement {
    render() {
        return `
            <style>
                :host { display: flex; flex: none; height: 27px; align-items: center; padding: 1px 2px 0; background: var(--face); border-top: 1px solid var(--light); box-sizing: border-box; }
                .start, .task {
                    display: flex; align-items: center; height: 22px; gap: 3px; padding: 0 2px;
                    border: 1px solid; border-color: var(--light) var(--dark) var(--dark) var(--light);
                    box-shadow: inset -1px -1px var(--shade);
                }
                .start { width: 47px; gap: 1px; padding: 0; }
                .quick { display: flex; width: 200px; padding-left: 4px; }
                .tasks { flex: 1; display: flex; gap: 4px; min-width: 0; }
                .task { width: 159px; padding-left: 3px; }
                .active {
                    border-color: var(--dark) var(--light) var(--light) var(--dark); box-shadow: none;
                    background: repeating-conic-gradient(#fff 0 25%, var(--face) 0 50%) 0 0 / 2px 2px;
                }
                .tray {
                    display: flex; width: 60px; height: 21px; align-items: center; justify-content: space-between; padding: 0 6px 0 4px; font-size: 10px;
                    border: 1px solid; border-color: var(--shade) var(--light) var(--light) var(--shade);
                }
            </style>
            <button class="start">${svg('windows', 18)}开始</button>
            <div class="quick">${tools('show server cubes monitor shield pencils maxthon')}</div>
            <div class="tasks">
                <button class="task">${svg('maxthon')}<span>杜洋工作室<span class="latin"> DoYoung ...</span></span></button>
                <button class="task">${svg('folder')}<span>我的文档</span></button>
                <button class="task active">${svg('logo')}<span class="latin">AutoCAD 2007 - [C:\\...</span></button>
            </div>
            <div class="tray"><span>«</span><time>15:56</time></div>`;
    }
}
customElements.define('cad-taskbar', CadTaskbar);

class CadDesktop extends CadElement {
    render() {
        return `
            <style>
                :host { display: flex; flex-direction: column; height: 100vh; background: linear-gradient(#6d8fb0 0 94px, #d3e2ee 0); }
                .window {
                    flex: 1; min-height: 0; display: flex; flex-direction: column; margin: 3px 3px 0 2px; padding: 1px;
                    background: var(--face);
                    border: 2px solid; border-color: var(--light) var(--dark) var(--dark) var(--light);
                    border-left-width: 3px;
                }
                .gap { height: 3px; background: var(--face); }
            </style>
            <div class="window">
                <cad-titlebar></cad-titlebar>
                <cad-menubar></cad-menubar>
                <cad-tool-rows></cad-tool-rows>
                <cad-workspace></cad-workspace>
                <cad-command></cad-command>
                <cad-status></cad-status>
            </div>
            <div class="gap"></div>
            <cad-taskbar></cad-taskbar>`;
    }
}
customElements.define('cad-desktop', CadDesktop);
</script>
</body>
</html>
